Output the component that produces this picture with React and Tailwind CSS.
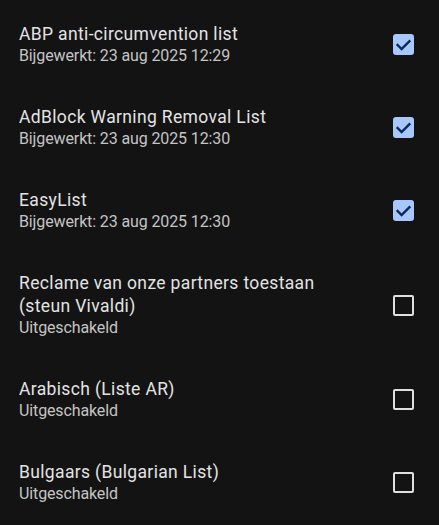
import React, { useState } from "react";

const initialLists = [
  { id: 1, name: "ABP anti-circumvention list", status: "Bijgewerkt: 23 aug 2025 12:29", enabled: true },
  { id: 2, name: "AdBlock Warning Removal List", status: "Bijgewerkt: 23 aug 2025 12:30", enabled: true },
  { id: 3, name: "EasyList", status: "Bijgewerkt: 23 aug 2025 12:30", enabled: true },
  { id: 4, name: "Reclame van onze partners toestaan (steun Vivaldi)", status: "Uitgeschakeld", enabled: false },
  { id: 5, name: "Arabisch (Liste AR)", status: "Uitgeschakeld", enabled: false },
  { id: 6, name: "Bulgaars (Bulgarian List)", status: "Uitgeschakeld", enabled: false },
];

const Checkbox = ({ checked, onClick }) => {
  if (checked) {
    return (
      <button
        onClick={onClick}
        className="w-[21px] h-[21px] rounded-[3px] bg-[#a8c7fa] flex items-center justify-center shrink-0"
      >
        <svg width="21" height="21" viewBox="0 0 21 21">
          <path
            d="M4.6 11 L8.6 15 L16.4 7.2"
            fill="none"
            stroke="#0a2a5c"
            strokeWidth="2.4"
            strokeLinecap="square"
          />
        </svg>
      </button>
    );
  }
  return (
    <button
      onClick={onClick}
      className="w-[21px] h-[21px] rounded-[2px] border-[2.5px] border-[#e0e0e0] shrink-0"
    />
  );
};

const App = () => {
  const [lists, setLists] = useState(initialLists);

  const toggle = (id) => {
    setLists(lists.map((l) => (l.id === id ? { ...l, enabled: !l.enabled } : l)));
  };

  return (
    <div className="min-h-screen bg-[#131313] pt-[3px] font-['Roboto',sans-serif]">
      <ul>
        {lists.map((list) => (
          <li key={list.id} className="flex items-center pl-[19px] pr-[25px] py-[20px]">
            <div className="flex-1 pr-[40px]">
              <div className="text-[17.5px] leading-[23px] tracking-[0.35px] text-[#e3e3e3]">{list.name}</div>
              <div className="text-[16px] leading-[20px] tracking-[-0.12px] text-[#c4c4c4]">{list.status}</div>
            </div>
            <Checkbox checked={list.enabled} onClick={() => toggle(list.id)} />
          </li>
        ))}
      </ul>
    </div>
  );
};

export default App;
